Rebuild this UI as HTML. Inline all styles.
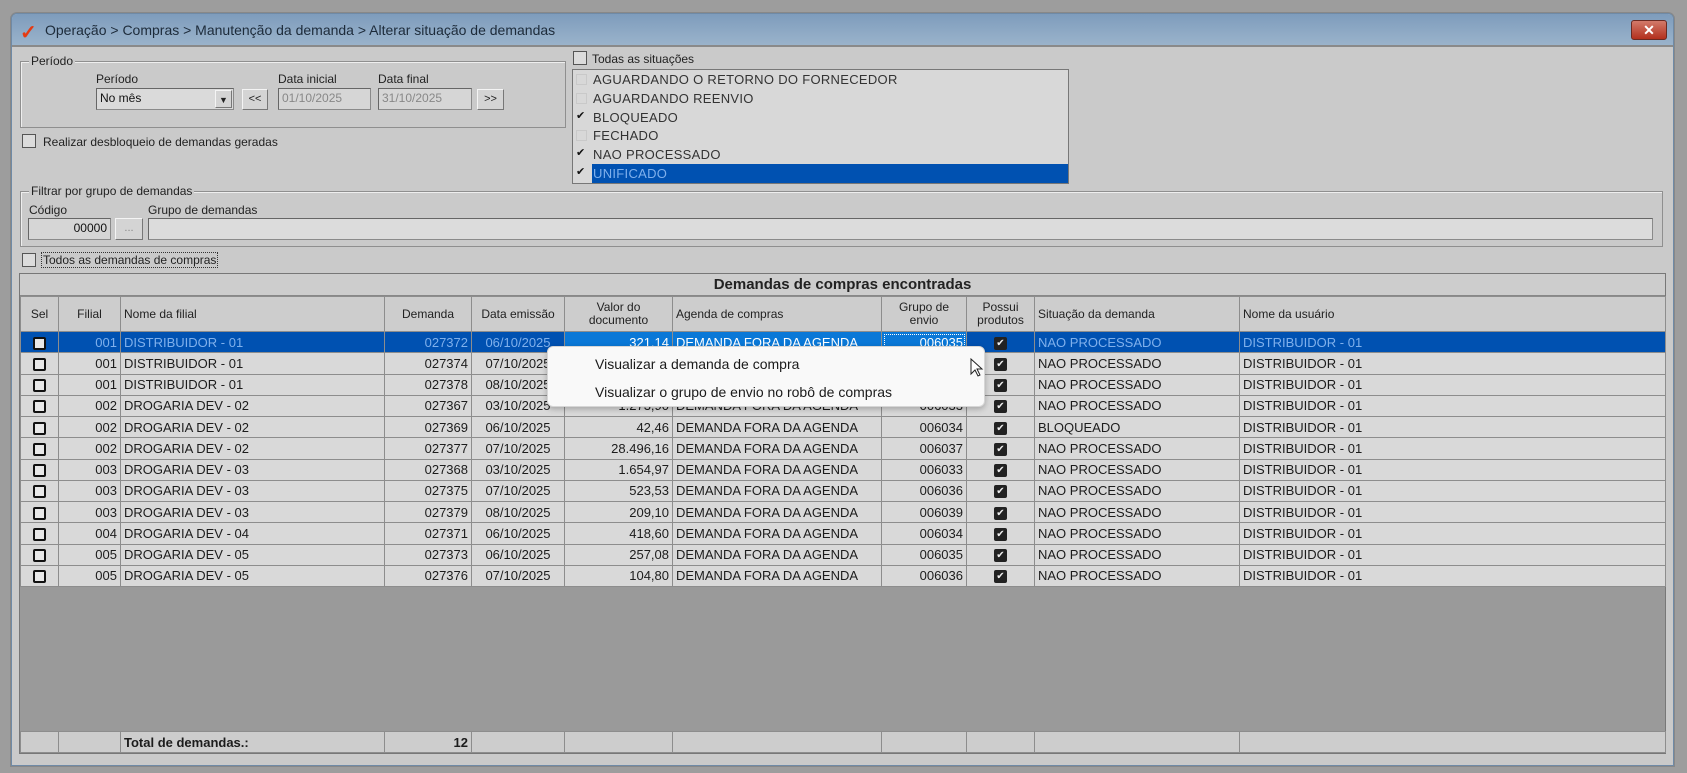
<!DOCTYPE html>
<html><head><meta charset="utf-8">
<style>
*{box-sizing:border-box;margin:0;padding:0}
body{width:1687px;height:773px;background:#9d9d9d;font-family:"Liberation Sans",sans-serif;font-size:12px;color:#222;position:relative;overflow:hidden}
.abs{position:absolute}
.win{left:11px;top:13px;width:1663px;height:753px;background:#cacaca;border:1px solid #6f8aa6;border-radius:6px 6px 0 0;box-shadow:0 0 0 1px #888}
.tb{left:0;top:0;width:100%;height:33px;background:linear-gradient(#7e9cbc,#9ab3cb);border-radius:5px 5px 0 0;border-bottom:2px solid #8a8a8a}
.tt{left:33px;top:8px;font-size:14px;color:#1d2b3a}
.close{left:1619px;top:6px;width:36px;height:20px;background:linear-gradient(#d27a6a,#b3301d);border:1px solid #6a2a22;border-radius:3px;color:#fff;font-weight:bold;text-align:center;font-size:14px;line-height:18px}
.grp{border:1px solid #8f8f8f;box-shadow:inset 1px 1px 0 #eee}
.gl{background:#cacaca;padding:0 2px;font-size:12px}
.inp{background:#d6d6d6;border:1px solid #8a8a8a;border-top-color:#666;border-left-color:#666;font-size:12px;padding:2px 3px;color:#888}
.btn{background:#d4d4d4;border:1px solid #777;border-top-color:#f4f4f4;border-left-color:#f4f4f4;text-align:center;font-size:11px;line-height:18px}
.cb{width:14px;height:14px;border:1px solid #555;background:#dcdcdc}
.list{left:572px;top:69px;width:497px;height:115px;background:#d8d8d8;border:1px solid #777}
.li{position:absolute;left:0;width:100%;height:18.8px;font-size:13px;color:#333;padding-left:20px;line-height:19px;letter-spacing:.3px}
.li i{position:absolute;left:3px;top:4px;width:11px;height:11px;border:1px solid #c9c9c9;font-style:normal;font-size:11px;line-height:9px;color:#111}
table{position:absolute;border-collapse:collapse;table-layout:fixed}
td{border:1px solid #8d8d8d;height:21.25px;padding:0 3px;white-space:nowrap;overflow:hidden;font-size:13px;color:#1c1c1c;background:#d9d9d9}
thead td{background:#cdcdcd;font-size:12px;color:#222;line-height:13px;height:35px}
.r{text-align:right}.c{text-align:center}
.sq{display:inline-block;width:13px;height:13px;border:2px solid #111;border-radius:2px;background:#e8e8e8;vertical-align:middle}
.ck{display:inline-block;width:13px;height:13px;background:#222;color:#eee;font-size:10px;line-height:13px;text-align:center;border-radius:2px;vertical-align:middle}
tr.sel td{background:#0051b1;color:#7fb0ec}
tr.sel td.lb{background:#0a78d7;color:#fff}
</style></head><body>
<div class="abs win">
 <div class="abs tb"></div>
 <div class="abs" style="left:8px;top:6px;color:#e53a12;font-size:20px;font-weight:bold">✓</div>
 <div class="abs tt">Operação &gt; Compras &gt; Manutenção da demanda &gt; Alterar situação de demandas</div>
 <div class="abs close">✕</div>
</div>
<div class="abs grp" style="left:20px;top:61px;width:546px;height:67px"></div>
<div class="abs gl" style="left:29px;top:54px">Período</div>
<div class="abs" style="left:96px;top:72px">Período</div>
<div class="abs inp" style="left:96px;top:88px;width:138px;height:22px;color:#111;background:#dadada">No mês</div>
<div class="abs btn" style="left:215px;top:90px;width:17px;height:18px;font-size:9px">▼</div>
<div class="abs btn" style="left:242px;top:89px;width:26px;height:21px">&lt;&lt;</div>
<div class="abs" style="left:278px;top:72px">Data inicial</div>
<div class="abs inp" style="left:278px;top:88px;width:93px;height:22px">01/10/2025</div>
<div class="abs" style="left:378px;top:72px">Data final</div>
<div class="abs inp" style="left:378px;top:88px;width:94px;height:22px">31/10/2025</div>
<div class="abs btn" style="left:477px;top:89px;width:27px;height:21px">&gt;&gt;</div>
<div class="abs cb" style="left:22px;top:134px"></div>
<div class="abs" style="left:43px;top:135px">Realizar desbloqueio de demandas geradas</div>
<div class="abs cb" style="left:573px;top:51px"></div>
<div class="abs" style="left:592px;top:52px">Todas as situações</div>
<div class="abs list">
 <div class="li" style="top:0"><i></i>AGUARDANDO O RETORNO DO FORNECEDOR</div>
 <div class="li" style="top:18.8px"><i></i>AGUARDANDO REENVIO</div>
 <div class="li" style="top:37.6px"><i style="border:none">✔</i>BLOQUEADO</div>
 <div class="li" style="top:56.4px"><i></i>FECHADO</div>
 <div class="li" style="top:75.2px"><i style="border:none">✔</i>NAO PROCESSADO</div>
 <div class="li" style="top:94px;background:#0051b1;color:#7fb0ec;left:19px;padding-left:1px;width:476px"><i style="border:none;left:-16px;color:#111">✔</i>UNIFICADO</div>
</div>
<div class="abs grp" style="left:20px;top:191px;width:1643px;height:56px"></div>
<div class="abs gl" style="left:29px;top:184px">Filtrar por grupo de demandas</div>
<div class="abs" style="left:29px;top:203px">Código</div>
<div class="abs inp" style="left:28px;top:218px;width:83px;height:22px;text-align:right;color:#111">00000</div>
<div class="abs btn" style="left:115px;top:218px;width:28px;height:22px;color:#888">...</div>
<div class="abs" style="left:148px;top:203px">Grupo de demandas</div>
<div class="abs inp" style="left:148px;top:218px;width:1505px;height:22px;background:#dcdcdc"></div>
<div class="abs cb" style="left:22px;top:253px"></div>
<div class="abs" style="left:41px;top:252px;border:1px dotted #333;padding:0 1px">Todos as demandas de compras</div>
<div class="abs" style="left:19px;top:273px;width:1647px;height:481px;background:#9a9a9a;border:1px solid #777"></div>
<div class="abs" style="left:20px;top:274px;width:1645px;height:22px;background:#cdcdcd;border-bottom:1px solid #888;text-align:center;font-weight:bold;font-size:15px;line-height:22px">Demandas de compras encontradas</div>
<table style="left:20px;top:296px;width:1645px">
<colgroup><col style="width:38px"><col style="width:62px"><col style="width:264px"><col style="width:87px"><col style="width:93px"><col style="width:108px"><col style="width:209px"><col style="width:85px"><col style="width:68px"><col style="width:205px"><col style="width:426px"></colgroup>
<thead><tr><td class="c">Sel</td><td class="c">Filial</td><td>Nome da filial</td><td class="c">Demanda</td><td class="c">Data emissão</td><td class="c">Valor do<br>documento</td><td>Agenda de compras</td><td class="c">Grupo de<br>envio</td><td class="c">Possui<br>produtos</td><td>Situação da demanda</td><td>Nome da usuário</td></tr></thead>
<tbody>
<tr class="sel"><td class="c"><span class="sq"></span></td><td class="r">001</td><td>DISTRIBUIDOR - 01</td><td class="r">027372</td><td class="c">06/10/2025</td><td class="r lb">321,14</td><td class="lb">DEMANDA FORA DA AGENDA</td><td class="r lb" style="outline:1px dotted #fff;outline-offset:-3px">006035</td><td class="c"><span class="ck">✔</span></td><td>NAO PROCESSADO</td><td>DISTRIBUIDOR - 01</td></tr>
<tr><td class="c"><span class="sq"></span></td><td class="r">001</td><td>DISTRIBUIDOR - 01</td><td class="r">027374</td><td class="c">07/10/2025</td><td class="r">310,22</td><td>DEMANDA FORA DA AGENDA</td><td class="r">006037</td><td class="c"><span class="ck">✔</span></td><td>NAO PROCESSADO</td><td>DISTRIBUIDOR - 01</td></tr>
<tr><td class="c"><span class="sq"></span></td><td class="r">001</td><td>DISTRIBUIDOR - 01</td><td class="r">027378</td><td class="c">08/10/2025</td><td class="r">115,40</td><td>DEMANDA FORA DA AGENDA</td><td class="r">006039</td><td class="c"><span class="ck">✔</span></td><td>NAO PROCESSADO</td><td>DISTRIBUIDOR - 01</td></tr>
<tr><td class="c"><span class="sq"></span></td><td class="r">002</td><td>DROGARIA DEV - 02</td><td class="r">027367</td><td class="c">03/10/2025</td><td class="r">1.273,90</td><td>DEMANDA FORA DA AGENDA</td><td class="r">006033</td><td class="c"><span class="ck">✔</span></td><td>NAO PROCESSADO</td><td>DISTRIBUIDOR - 01</td></tr>
<tr><td class="c"><span class="sq"></span></td><td class="r">002</td><td>DROGARIA DEV - 02</td><td class="r">027369</td><td class="c">06/10/2025</td><td class="r">42,46</td><td>DEMANDA FORA DA AGENDA</td><td class="r">006034</td><td class="c"><span class="ck">✔</span></td><td>BLOQUEADO</td><td>DISTRIBUIDOR - 01</td></tr>
<tr><td class="c"><span class="sq"></span></td><td class="r">002</td><td>DROGARIA DEV - 02</td><td class="r">027377</td><td class="c">07/10/2025</td><td class="r">28.496,16</td><td>DEMANDA FORA DA AGENDA</td><td class="r">006037</td><td class="c"><span class="ck">✔</span></td><td>NAO PROCESSADO</td><td>DISTRIBUIDOR - 01</td></tr>
<tr><td class="c"><span class="sq"></span></td><td class="r">003</td><td>DROGARIA DEV - 03</td><td class="r">027368</td><td class="c">03/10/2025</td><td class="r">1.654,97</td><td>DEMANDA FORA DA AGENDA</td><td class="r">006033</td><td class="c"><span class="ck">✔</span></td><td>NAO PROCESSADO</td><td>DISTRIBUIDOR - 01</td></tr>
<tr><td class="c"><span class="sq"></span></td><td class="r">003</td><td>DROGARIA DEV - 03</td><td class="r">027375</td><td class="c">07/10/2025</td><td class="r">523,53</td><td>DEMANDA FORA DA AGENDA</td><td class="r">006036</td><td class="c"><span class="ck">✔</span></td><td>NAO PROCESSADO</td><td>DISTRIBUIDOR - 01</td></tr>
<tr><td class="c"><span class="sq"></span></td><td class="r">003</td><td>DROGARIA DEV - 03</td><td class="r">027379</td><td class="c">08/10/2025</td><td class="r">209,10</td><td>DEMANDA FORA DA AGENDA</td><td class="r">006039</td><td class="c"><span class="ck">✔</span></td><td>NAO PROCESSADO</td><td>DISTRIBUIDOR - 01</td></tr>
<tr><td class="c"><span class="sq"></span></td><td class="r">004</td><td>DROGARIA DEV - 04</td><td class="r">027371</td><td class="c">06/10/2025</td><td class="r">418,60</td><td>DEMANDA FORA DA AGENDA</td><td class="r">006034</td><td class="c"><span class="ck">✔</span></td><td>NAO PROCESSADO</td><td>DISTRIBUIDOR - 01</td></tr>
<tr><td class="c"><span class="sq"></span></td><td class="r">005</td><td>DROGARIA DEV - 05</td><td class="r">027373</td><td class="c">06/10/2025</td><td class="r">257,08</td><td>DEMANDA FORA DA AGENDA</td><td class="r">006035</td><td class="c"><span class="ck">✔</span></td><td>NAO PROCESSADO</td><td>DISTRIBUIDOR - 01</td></tr>
<tr><td class="c"><span class="sq"></span></td><td class="r">005</td><td>DROGARIA DEV - 05</td><td class="r">027376</td><td class="c">07/10/2025</td><td class="r">104,80</td><td>DEMANDA FORA DA AGENDA</td><td class="r">006036</td><td class="c"><span class="ck">✔</span></td><td>NAO PROCESSADO</td><td>DISTRIBUIDOR - 01</td></tr>
</tbody></table>
<table style="left:20px;top:731px;width:1645px">
<colgroup><col style="width:38px"><col style="width:62px"><col style="width:264px"><col style="width:87px"><col style="width:93px"><col style="width:108px"><col style="width:209px"><col style="width:85px"><col style="width:68px"><col style="width:205px"><col style="width:426px"></colgroup>
<tr><td style="background:#cdcdcd"></td><td style="background:#cdcdcd"></td><td style="background:#cdcdcd;font-weight:bold">Total de demandas.:</td><td class="r" style="background:#cdcdcd;font-weight:bold">12</td><td style="background:#cdcdcd"></td><td style="background:#cdcdcd"></td><td style="background:#cdcdcd"></td><td style="background:#cdcdcd"></td><td style="background:#cdcdcd"></td><td style="background:#cdcdcd"></td><td style="background:#cdcdcd"></td></tr>
</table>
<div class="abs" style="left:547px;top:346px;width:438px;height:61px;background:#f9f9f9;border:1px solid #d6d6d6;border-radius:6px;box-shadow:0 2px 6px rgba(0,0,0,.25);font-size:14px;color:#1a1a1a">
 <div class="abs" style="left:47px;top:9px">Visualizar a demanda de compra</div>
 <div class="abs" style="left:47px;top:37px">Visualizar o grupo de envio no robô de compras</div>
</div>
<svg class="abs" style="left:970px;top:358px" width="14" height="20" viewBox="0 0 14 20"><path d="M1 1 L1 16 L5 12 L8 18 L10 17 L7 11 L12 11 Z" fill="#fff" stroke="#222" stroke-width="1"/></svg>
</body></html>
